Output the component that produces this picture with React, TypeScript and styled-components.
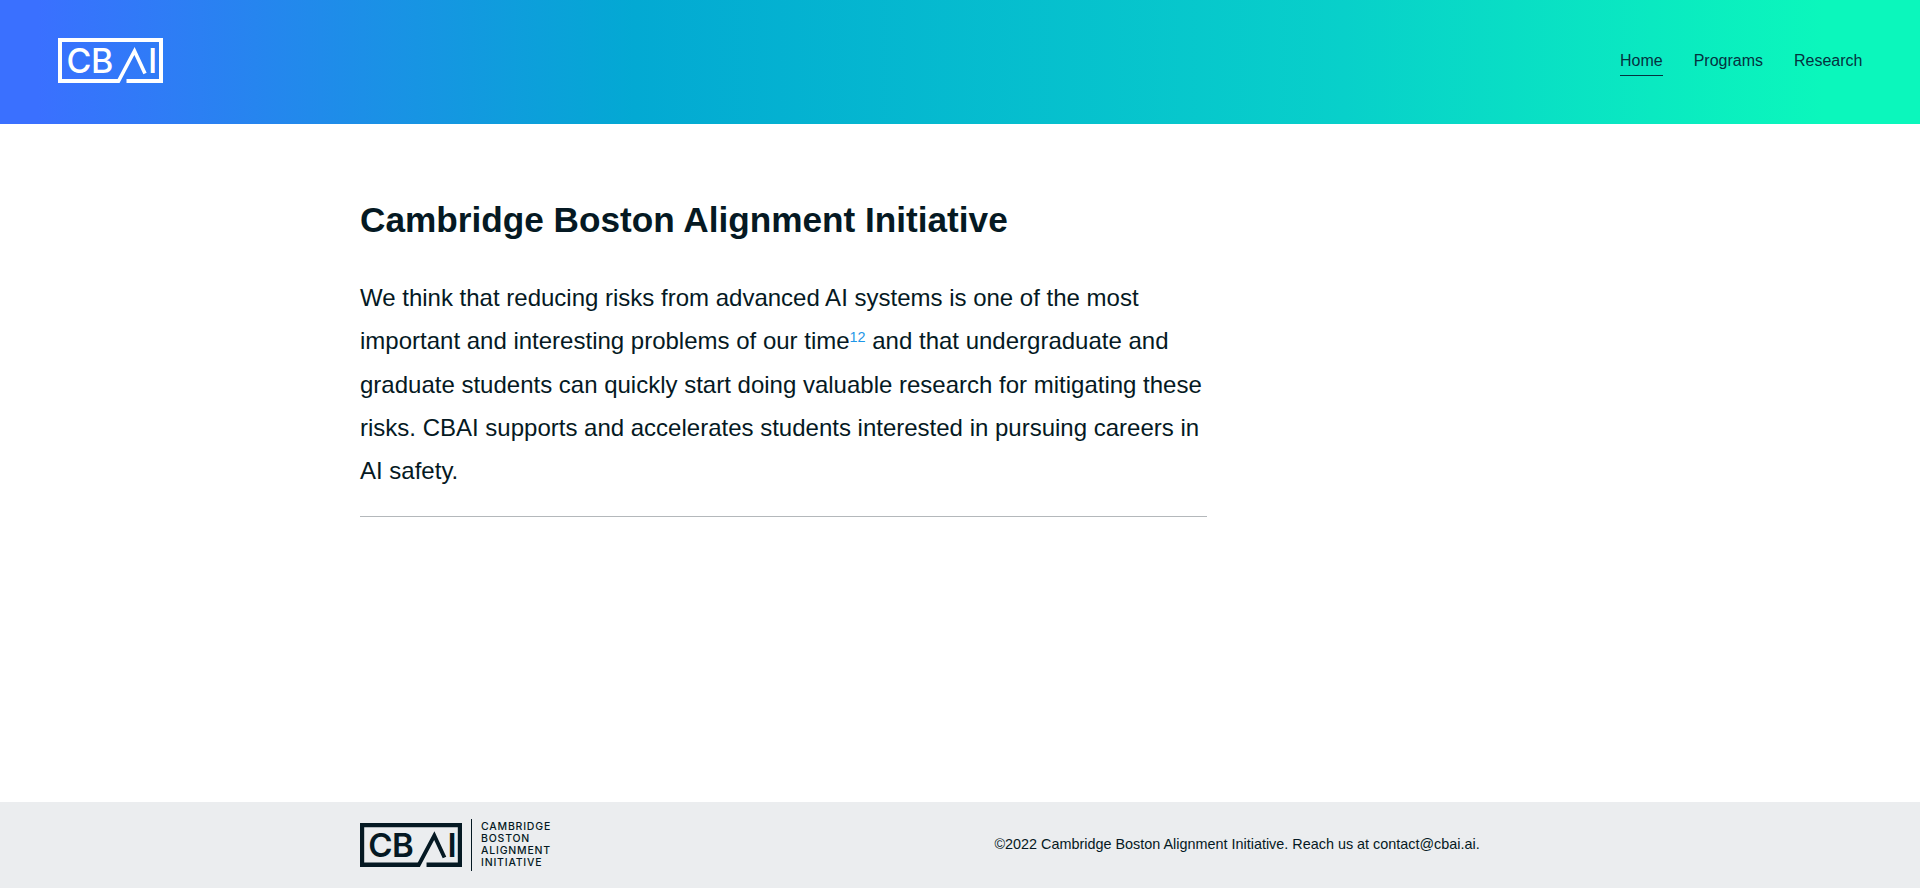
import React from "react";
import styled, { createGlobalStyle } from "styled-components";

const GlobalStyle = createGlobalStyle`
  html, body {
    margin: 0;
    padding: 0;
    background: #fff;
    font-family: "Liberation Sans", Arial, sans-serif;
    color: #051923;
  }
`;

const Page = styled.div`
  min-height: 888px;
  display: flex;
  flex-direction: column;
`;

const Header = styled.header`
  height: 124px;
  box-sizing: border-box;
  padding: 0 57.5px 0 58px;
  display: flex;
  align-items: center;
  justify-content: space-between;
  background: linear-gradient(90deg, #3a70ff 2%, #03a9d3 33%, #08d0ca 70%, #0bf7bc 95%);
`;

const HeaderLogo = styled.div`
  margin-bottom: 3px;
`;

const Nav = styled.nav`
  display: flex;
  gap: 31px;
`;

const NavLink = styled.a<{ $active?: boolean }>`
  font-size: 16px;
  line-height: 23px;
  padding-bottom: 3px;
  color: #05323f;
  border-bottom: 1px solid ${(p) => (p.$active ? "#05323f" : "transparent")};
`;

const Main = styled.main`
  flex: 1;
  width: 847px;
  margin-left: 360px;
  padding-top: 72px;
`;

const Title = styled.h1`
  margin: 0 0 32.2px;
  font-size: 35.2px;
  line-height: 48px;
  font-weight: 700;
  color: #051923;
`;

const Lead = styled.p`
  margin: 0;
  font-size: 24px;
  line-height: 43.2px;
  color: #051923;
`;

const Note = styled.sup`
  font-size: 14.4px;
  line-height: 0;
  vertical-align: 7px;
  color: #1e96e8;
`;

const Rule = styled.hr`
  margin: 23.8px 0 0;
  border: 0;
  height: 1px;
  background: #b4b8bb;
`;

const Footer = styled.footer`
  height: 86px;
  box-sizing: border-box;
  padding-left: 360px;
  display: flex;
  align-items: center;
  background: #ebedef;
`;

const Copy = styled.p`
  margin: 0 0 2px 418.5px;
  font-size: 14.4px;
  line-height: 20px;
  color: #051923;
`;

const LogoMark = styled.svg`
  display: block;
  flex-shrink: 0;
`;

const LogoLetter = styled.text<{ $heavy?: boolean }>`
  font-family: "Inter", sans-serif;
  font-size: 34px;
  font-weight: ${(p) => (p.$heavy ? 600 : 500)};
`;

const Logo = ({ color, width, heavy }: { color: string; width: number; heavy?: boolean }) => (
  <LogoMark width={width} viewBox="0 0 105 45">
    <path d="M60.5 43 H2 V2 H103 V43 H68.5" fill="none" stroke={color} strokeWidth={heavy ? 4.6 : 4} />
    <path d="M59.5 45 L76.5 13 L87 35.5" fill="none" stroke={color} strokeWidth={heavy ? 4 : 3.6} />
    <LogoLetter $heavy={heavy} x="8.5" y="35" fill={color}>
      C
    </LogoLetter>
    <LogoLetter $heavy={heavy} x="33" y="35" fill={color}>
      B
    </LogoLetter>
    <LogoLetter $heavy={heavy} x="90" y="35" fill={color}>
      I
    </LogoLetter>
  </LogoMark>
);

const FooterBrand = styled.div`
  display: flex;
  align-items: center;
  width: 216px;
  flex-shrink: 0;
`;

const Divider = styled.span`
  width: 1px;
  height: 52px;
  margin: 0 9px;
  background: #051923;
`;

const BrandText = styled.div`
  font-family: "Inter", sans-serif;
  font-size: 10.5px;
  line-height: 12px;
  font-weight: 500;
  letter-spacing: 0.8px;
  white-space: nowrap;
  color: #051923;
`;

export default function App() {
  return (
    <Page>
      <GlobalStyle />
      <Header>
        <HeaderLogo>
          <Logo color="#fff" width={105} />
        </HeaderLogo>
        <Nav>
          <NavLink $active>Home</NavLink>
          <NavLink>Programs</NavLink>
          <NavLink>Research</NavLink>
        </Nav>
      </Header>
      <Main>
        <Title>Cambridge Boston Alignment Initiative</Title>
        <Lead>
          We think that reducing risks from advanced AI systems is one of the most important and
          interesting problems of our time<Note>12</Note> and that undergraduate and graduate
          students can quickly start doing valuable research for mitigating these risks. CBAI
          supports and accelerates students interested in pursuing careers in AI safety.
        </Lead>
        <Rule />
      </Main>
      <Footer>
        <FooterBrand>
          <Logo color="#051923" width={102} heavy />
          <Divider />
          <BrandText>
            CAMBRIDGE
            <br />
            BOSTON
            <br />
            ALIGNMENT
            <br />
            INITIATIVE
          </BrandText>
        </FooterBrand>
        <Copy>©2022 Cambridge Boston Alignment Initiative. Reach us at contact@cbai.ai.</Copy>
      </Footer>
    </Page>
  );
}
